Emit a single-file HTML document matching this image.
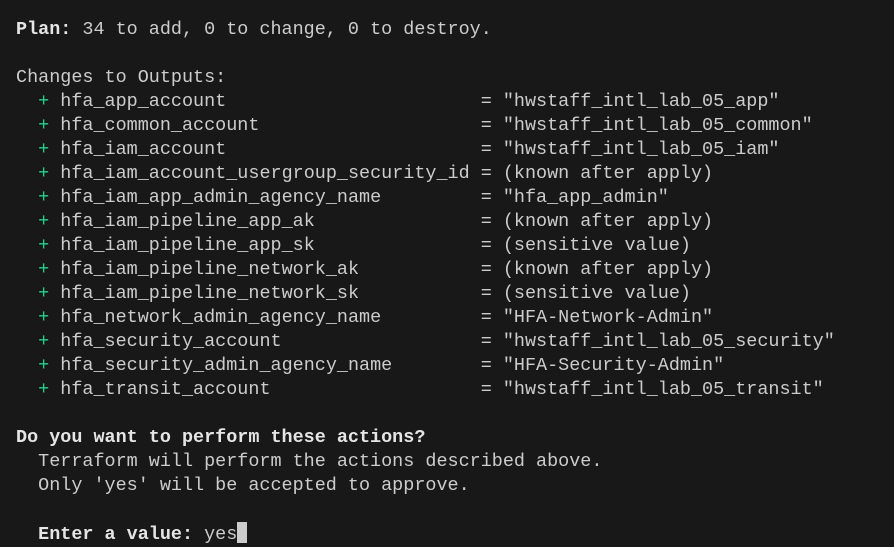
<!DOCTYPE html>
<html><head><style>
html,body{margin:0;padding:0;background:#181818;width:894px;height:547px;overflow:hidden}
pre{margin:0;position:absolute;left:16px;top:18px;font-family:"Liberation Mono",monospace;font-size:18.45px;line-height:24px;color:#cccccc;white-space:pre}
b{font-weight:bold;color:#e5e5e5}
.g{color:#23d18b}
.c{display:inline-block;width:10px;height:21px;background:#cccccc;vertical-align:-4px}
</style></head><body><pre><b>Plan:</b> 34 to add, 0 to change, 0 to destroy.

Changes to Outputs:
  <span class="g">+</span> hfa_app_account                       = "hwstaff_intl_lab_05_app"
  <span class="g">+</span> hfa_common_account                    = "hwstaff_intl_lab_05_common"
  <span class="g">+</span> hfa_iam_account                       = "hwstaff_intl_lab_05_iam"
  <span class="g">+</span> hfa_iam_account_usergroup_security_id = (known after apply)
  <span class="g">+</span> hfa_iam_app_admin_agency_name         = "hfa_app_admin"
  <span class="g">+</span> hfa_iam_pipeline_app_ak               = (known after apply)
  <span class="g">+</span> hfa_iam_pipeline_app_sk               = (sensitive value)
  <span class="g">+</span> hfa_iam_pipeline_network_ak           = (known after apply)
  <span class="g">+</span> hfa_iam_pipeline_network_sk           = (sensitive value)
  <span class="g">+</span> hfa_network_admin_agency_name         = "HFA-Network-Admin"
  <span class="g">+</span> hfa_security_account                  = "hwstaff_intl_lab_05_security"
  <span class="g">+</span> hfa_security_admin_agency_name        = "HFA-Security-Admin"
  <span class="g">+</span> hfa_transit_account                   = "hwstaff_intl_lab_05_transit"

<b>Do you want to perform these actions?</b>
  Terraform will perform the actions described above.
  Only 'yes' will be accepted to approve.

  <b>Enter a value:</b> yes<span class="c"></span></pre></body></html>
